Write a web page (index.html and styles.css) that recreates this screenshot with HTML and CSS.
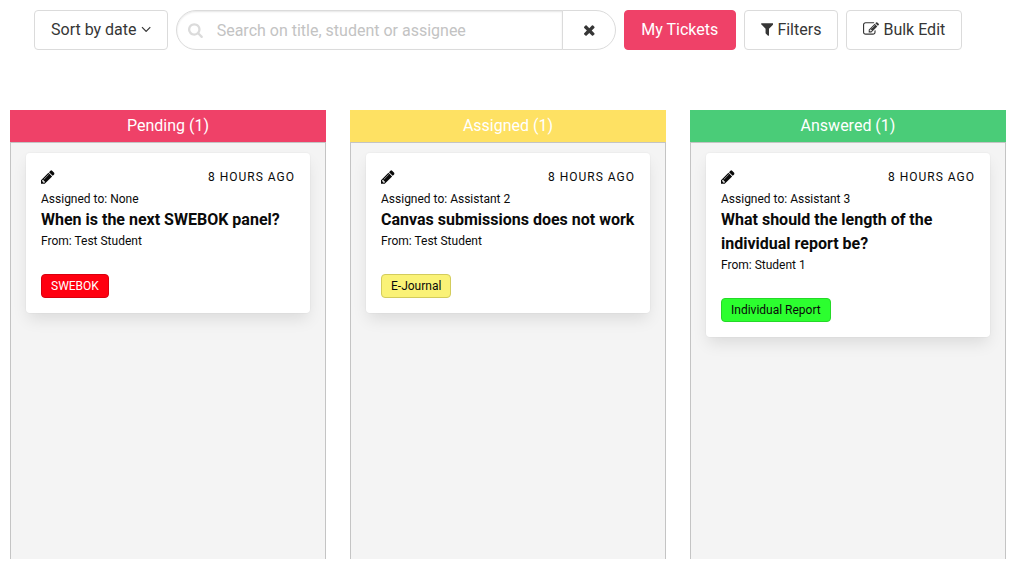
FILE: index.html
```html
<!DOCTYPE html>
<html lang="en">
<head>
<meta charset="utf-8">
<title>Tickets</title>
<link rel="stylesheet" href="styles.css">
</head>
<body>
<svg class="symbols" aria-hidden="true">
  <symbol id="pencil" viewBox="128 0 1536 1792"><path d="M491 1536l91-91-235-235-91 91v107h128v128h107zm523-928q0-22-22-22-10 0-17 7l-542 542q-7 7-7 17 0 22 22 22 10 0 17-7l542-542q7-7 7-17zm-54-192l416 416-832 832h-416v-416zm683 96q0 53-37 90l-166 166-416-416 166-165q36-38 90-38 53 0 91 38l235 234q37 39 37 91z"/></symbol>
</svg>
<nav class="toolbar">
  <button class="button">Sort by date <svg class="icon icon-angle" viewBox="320 0 1152 1792"><path d="M1395 736q0 13-10 23l-466 466q-10 10-23 10t-23-10l-466-466q-10-10-10-23t10-23l50-50q10-10 23-10t23 10l393 393 393-393q10-10 23-10t23 10l50 50q10 10 10 23z"/></svg></button>
  <div class="search">
    <label class="search-field">
      <svg class="icon icon-search" viewBox="64 0 1664 1792"><path d="M1216 832q0-185-131.500-316.500t-316.500-131.500-316.500 131.500-131.500 316.500 131.500 316.500 316.500 131.500 316.500-131.500 131.500-316.500zm512 832q0 52-38 90t-90 38q-54 0-90-38l-343-342q-179 124-399 124-143 0-273.500-55.500t-225-150-150-225-55.500-273.500 55.500-273.500 150-225 225-150 273.500-55.500 273.500 55.500 225 150 150 225 55.500 273.500q0 220-124 399l343 343q37 37 37 90z"/></svg>
      <input class="search-input" type="text" placeholder="Search on title, student or assignee">
    </label>
    <button class="button search-clear" aria-label="Clear"><svg class="icon icon-times" viewBox="192 0 1408 1792"><path d="M1490 1322q0 40-28 68l-136 136q-28 28-68 28t-68-28l-294-294-294 294q-28 28-68 28t-68-28l-136-136q-28-28-28-68t28-68l294-294-294-294q-28-28-28-68t28-68l136-136q28-28 68-28t68 28l294 294 294-294q28-28 68-28t68 28l136 136q28 28 28 68t-28 68l-294 294 294 294q28 28 28 68z"/></svg></button>
  </div>
  <button class="button primary">My Tickets</button>
  <button class="button"><svg class="icon icon-filter" viewBox="192 0 1408 1792"><path d="M1595 295q17 41-14 70l-493 493v742q0 42-39 59-13 5-25 5-27 0-45-19l-256-256q-19-19-19-45v-486l-493-493q-31-29-14-70 17-39 59-39h1280q42 0 59 39z"/></svg> Filters</button>
  <button class="button"><svg class="icon icon-edit" viewBox="0 0 1792 1792"><path d="M888 1184l116-116-152-152-116 116v56h96v96h56zm440-720q-16-16-33 1l-350 350q-17 17-1 33t33-1l350-350q17-17 1-33zm80 594v190q0 119-84.500 203.500t-203.500 84.500h-832q-119 0-203.500-84.500t-84.500-203.500v-832q0-119 84.500-203.500t203.500-84.500h832q63 0 117 25 15 7 18 23 3 17-9 29l-49 49q-14 14-32 8-23-6-45-6h-832q-66 0-113 47t-47 113v832q0 66 47 113t113 47h832q66 0 113-47t47-113v-126q0-13 9-22l64-64q15-15 35-7t20 29zm-96-738l288 288-672 672h-288v-288zm444 132l-92 92-288-288 92-92q28-28 68-28t68 28l152 152q28 28 28 68t-28 68z"/></svg> Bulk Edit</button>
</nav>
<main class="board">
  <section class="column">
    <h2 class="column-title pending">Pending (1)</h2>
    <div class="column-body">
      <article class="ticket">
        <header class="ticket-top"><svg class="icon icon-pencil"><use href="#pencil"/></svg><span class="ticket-time">8 hours ago</span></header>
        <p class="ticket-meta">Assigned to: None</p>
        <h3 class="ticket-title">When is the next SWEBOK panel?</h3>
        <p class="ticket-meta">From: Test Student</p>
        <span class="tag tag-red">SWEBOK</span>
      </article>
    </div>
  </section>
  <section class="column">
    <h2 class="column-title assigned">Assigned (1)</h2>
    <div class="column-body">
      <article class="ticket">
        <header class="ticket-top"><svg class="icon icon-pencil"><use href="#pencil"/></svg><span class="ticket-time">8 hours ago</span></header>
        <p class="ticket-meta">Assigned to: Assistant 2</p>
        <h3 class="ticket-title">Canvas submissions does not work</h3>
        <p class="ticket-meta">From: Test Student</p>
        <span class="tag tag-yellow">E-Journal</span>
      </article>
    </div>
  </section>
  <section class="column">
    <h2 class="column-title answered">Answered (1)</h2>
    <div class="column-body">
      <article class="ticket">
        <header class="ticket-top"><svg class="icon icon-pencil"><use href="#pencil"/></svg><span class="ticket-time">8 hours ago</span></header>
        <p class="ticket-meta">Assigned to: Assistant 3</p>
        <h3 class="ticket-title">What should the length of the individual report be?</h3>
        <p class="ticket-meta">From: Student 1</p>
        <span class="tag tag-green">Individual Report</span>
      </article>
    </div>
  </section>
</main>
</body>
</html>
```

FILE: styles.css
```css
* { box-sizing: border-box; }

body {
  margin: 0;
  height: 566px;
  overflow: hidden;
  background: #fff;
  color: #0a0a0a;
  font: 16px/24px Roboto, "Liberation Sans", sans-serif;
}

h2, h3, p { margin: 0; font-size: inherit; font-weight: 400; }

.symbols { display: none; }

.icon { height: 16px; fill: currentColor; flex: none; }
.icon-angle { width: 10.29px; margin-bottom: 1px; }
.icon-search { width: 14.86px; }
.icon-times { width: 12.57px; }
.icon-filter { width: 12.57px; margin-bottom: 1px; }
.icon-edit { width: 16px; margin-bottom: 1px; }
.icon-pencil { width: 13.71px; }

.toolbar { display: flex; gap: 8px; padding: 10px 34px 0; }

.button {
  height: 40px;
  padding: 0 16px 1px;
  border: 1px solid #dbdbdb;
  border-radius: 4px;
  background: #fff;
  color: #363636;
  font: inherit;
  white-space: nowrap;
  display: flex;
  align-items: center;
  gap: 4px;
}

.primary { width: 112px; justify-content: center; background: #ef4168; border-color: #ef4168; color: #fff; }

.search { display: flex; width: 440px; }

.search-field {
  flex: 1;
  display: flex;
  align-items: center;
  padding-left: 11px;
  border: 1px solid #dbdbdb;
  border-radius: 20px 0 0 20px;
  box-shadow: inset 0 1px 2px rgba(10, 10, 10, 0.1);
  color: #dbdbdb;
}

.search-input {
  flex: 1;
  min-width: 0;
  height: 38px;
  padding: 0 0 0 14px;
  border: 0;
  outline: 0;
  background: transparent;
  color: #363636;
  font: inherit;
}

.search-input::placeholder { color: #c3c3c3; opacity: 1; }

.search-clear {
  width: 54px;
  margin-left: -1px;
  padding: 0;
  justify-content: center;
  border-radius: 0 20px 20px 0;
}

.board {
  display: grid;
  grid-template-columns: repeat(3, 316px);
  gap: 24px;
  padding: 60px 10px 0;
}

.column-title { height: 32px; line-height: 32px; text-align: center; color: #fff; }
.pending { background: #ef4168; }
.assigned { background: #fee163; }
.answered { background: #4acc78; }

.column-body {
  height: 417px;
  padding: 10px 15px;
  border: 1px solid #c4c4c4;
  border-bottom: 0;
  background: #f4f4f4;
}

.ticket {
  padding: 15px;
  border-radius: 4px;
  background: #fff;
  box-shadow: 0 8px 16px -2px rgba(10, 10, 10, 0.1), 0 0 0 1px rgba(10, 10, 10, 0.02);
}

.ticket-top { display: flex; align-items: center; justify-content: space-between; height: 18px; margin-bottom: 4px; }
.ticket-time { font-size: 12px; line-height: 18px; letter-spacing: 1px; text-transform: uppercase; }
.ticket-meta { font-size: 12px; line-height: 18px; }
.ticket-title { font-weight: 700; }

.tag {
  display: block;
  width: fit-content;
  height: 24px;
  margin-top: 24px;
  padding: 0 9px;
  border: 1px solid;
  border-radius: 4px;
  font-size: 12px;
  line-height: 22px;
}

.tag-red { background: #ff0010; border-color: #d9000e; color: #fff; }
.tag-yellow { background: #faf277; border-color: #d3cc5c; color: #0a0a0a; }
.tag-green { background: #2cff2f; border-color: #25d928; color: #0a0a0a; }
```
